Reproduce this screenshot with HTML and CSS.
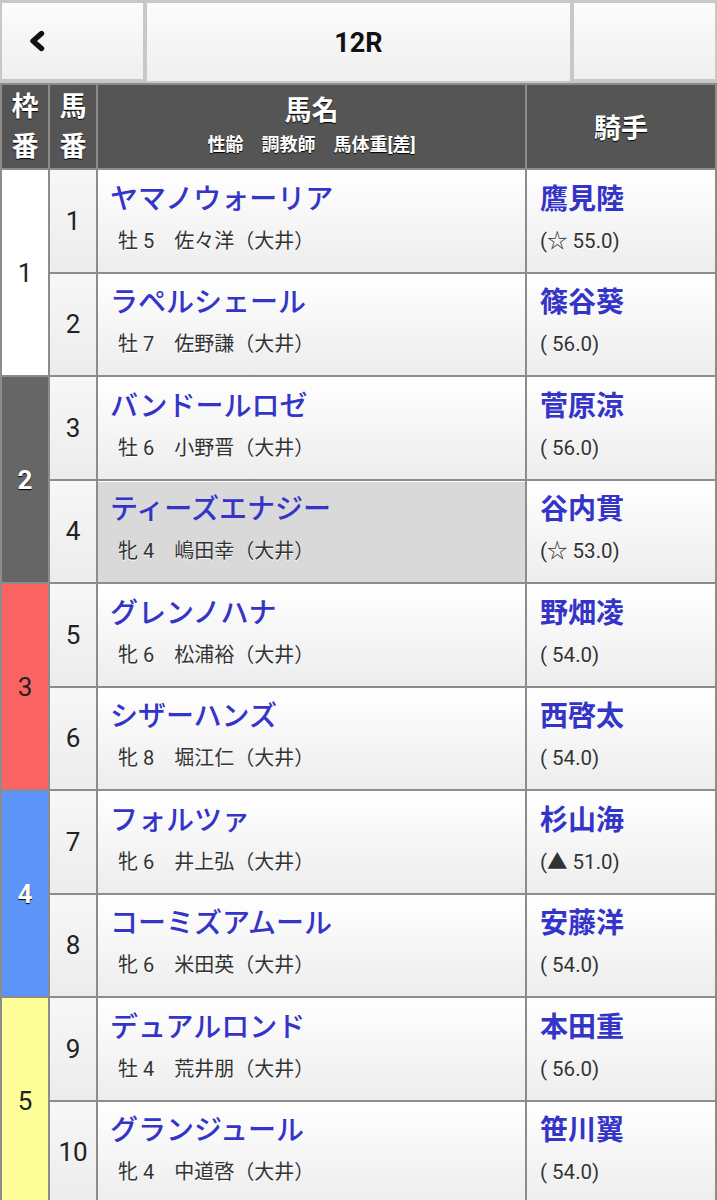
FILE: index.html
```html
<!DOCTYPE html>
<html lang="ja">
<head>
  <meta charset="UTF-8">
  <meta name="viewport" content="width=device-width, initial-scale=1.0">
  <title>12R 出馬表</title>
  <link rel="stylesheet" href="styles.css">
</head>
<body>
  <!-- Top Bar -->
  <header class="topbar">
    <a class="topbar-cell back" href="#">
      <svg width="18" height="22" viewBox="0 0 18 22"><polyline points="12.5,3.5 4,11 12.5,18.5" fill="none" stroke="#111" stroke-width="5.4" stroke-linecap="round" stroke-linejoin="round"/></svg>
    </a>
    <div class="topbar-cell title">12R</div>
    <div class="topbar-cell"></div>
  </header>

  <!-- Entry Table -->
  <table class="race">
    <thead>
      <tr>
        <th class="col-waku">枠<br>番</th>
        <th class="col-uma">馬<br>番</th>
        <th class="col-name">
          <div class="th-main">馬名</div>
          <div class="th-sub">性齢　調教師　馬体重[差]</div>
        </th>
        <th class="col-jockey">騎手</th>
      </tr>
    </thead>
    <tbody>
      <tr class="horse">
        <td class="waku waku-1" rowspan="2">1</td>
        <td class="umaban">1</td>
        <td class="name"><div class="horse-name">ヤマノウォーリア</div><div class="horse-sub">牡 5　佐々洋（大井）</div></td>
        <td class="jockey"><div class="jockey-name">鷹見陸</div><div class="jockey-sub">(☆ 55.0)</div></td>
      </tr>
      <tr class="horse">
        <td class="umaban">2</td>
        <td class="name"><div class="horse-name">ラペルシェール</div><div class="horse-sub">牡 7　佐野謙（大井）</div></td>
        <td class="jockey"><div class="jockey-name">篠谷葵</div><div class="jockey-sub">( 56.0)</div></td>
      </tr>
      <tr class="horse">
        <td class="waku waku-2" rowspan="2">2</td>
        <td class="umaban">3</td>
        <td class="name"><div class="horse-name">バンドールロゼ</div><div class="horse-sub">牡 6　小野晋（大井）</div></td>
        <td class="jockey"><div class="jockey-name">菅原涼</div><div class="jockey-sub">( 56.0)</div></td>
      </tr>
      <tr class="horse">
        <td class="umaban">4</td>
        <td class="name selected"><div class="horse-name">ティーズエナジー</div><div class="horse-sub">牝 4　嶋田幸（大井）</div></td>
        <td class="jockey"><div class="jockey-name">谷内貫</div><div class="jockey-sub">(☆ 53.0)</div></td>
      </tr>
      <tr class="horse">
        <td class="waku waku-3" rowspan="2">3</td>
        <td class="umaban">5</td>
        <td class="name"><div class="horse-name">グレンノハナ</div><div class="horse-sub">牝 6　松浦裕（大井）</div></td>
        <td class="jockey"><div class="jockey-name">野畑凌</div><div class="jockey-sub">( 54.0)</div></td>
      </tr>
      <tr class="horse">
        <td class="umaban">6</td>
        <td class="name"><div class="horse-name">シザーハンズ</div><div class="horse-sub">牝 8　堀江仁（大井）</div></td>
        <td class="jockey"><div class="jockey-name">西啓太</div><div class="jockey-sub">( 54.0)</div></td>
      </tr>
      <tr class="horse">
        <td class="waku waku-4" rowspan="2">4</td>
        <td class="umaban">7</td>
        <td class="name"><div class="horse-name">フォルツァ</div><div class="horse-sub">牝 6　井上弘（大井）</div></td>
        <td class="jockey"><div class="jockey-name">杉山海</div><div class="jockey-sub">(▲ 51.0)</div></td>
      </tr>
      <tr class="horse">
        <td class="umaban">8</td>
        <td class="name"><div class="horse-name">コーミズアムール</div><div class="horse-sub">牝 6　米田英（大井）</div></td>
        <td class="jockey"><div class="jockey-name">安藤洋</div><div class="jockey-sub">( 54.0)</div></td>
      </tr>
      <tr class="horse">
        <td class="waku waku-5" rowspan="2">5</td>
        <td class="umaban">9</td>
        <td class="name"><div class="horse-name">デュアルロンド</div><div class="horse-sub">牡 4　荒井朋（大井）</div></td>
        <td class="jockey"><div class="jockey-name">本田重</div><div class="jockey-sub">( 56.0)</div></td>
      </tr>
      <tr class="horse">
        <td class="umaban">10</td>
        <td class="name"><div class="horse-name">グランジュール</div><div class="horse-sub">牝 4　中道啓（大井）</div></td>
        <td class="jockey"><div class="jockey-name">笹川翼</div><div class="jockey-sub">( 54.0)</div></td>
      </tr>
    </tbody>
  </table>
</body>
</html>
```

FILE: styles.css
```css
/* General Styles */
body {
  margin: 0;
  background-color: #f9f9f9;
  font-family: Roboto, "Noto Sans CJK JP", sans-serif;
  color: #222;
}

/* Top Bar */
.topbar {
  display: grid;
  grid-template-columns: 1fr 3fr 1fr;
  gap: 4px;
  padding: 3px 2px 2px;
  background-color: #c8c8c8;
}

.topbar-cell {
  height: 76px;
  display: flex;
  align-items: center;
  justify-content: center;
  background: linear-gradient(#fcfcfc, #efefef);
  color: #111;
  text-decoration: none;
}

.topbar-cell.back {
  justify-content: flex-start;
  padding-left: 27px;
}

.topbar-cell.title {
  padding-top: 2px;
  font-size: 27px;
  font-weight: 700;
  text-shadow: 0 1px 0 #fff;
}

/* Entry Table */
.race {
  width: 717px;
  border-spacing: 2px;
  background-color: #8c8c8c;
  table-layout: fixed;
}

.race th {
  height: 83px;
  padding: 0;
  background-color: #555;
  color: #fff;
  font-weight: 700;
  text-shadow: 0 1px 1px #000;
}

.col-waku,
.col-uma {
  width: 46px;
  font-size: 27px;
  line-height: 40px;
}

.col-name {
  width: 427px;
}

.col-jockey {
  width: 188px;
  font-size: 27px;
}

.th-main {
  font-size: 27px;
  line-height: 36px;
}

.th-sub {
  font-size: 18px;
  line-height: 32px;
}

.horse {
  height: 101.5px;
}

.horse td {
  padding: 0;
  vertical-align: middle;
}

/* Frame (waku) colours */
.waku {
  text-align: center;
  font-size: 26px;
  color: #222;
}

.waku-1 { background-color: #fff; }
.waku-2 { background-color: #666; color: #fff; font-weight: 700; text-shadow: 0 1px 1px #000; }
.waku-3 { background-color: #fb6262; }
.waku-4 { background-color: #5d94f7; color: #fff; font-weight: 700; text-shadow: 0 1px 1px #000; }
.waku-5 { background-color: #ffff99; }

.umaban {
  text-align: center;
  font-size: 26px;
  background: linear-gradient(#f7f7f7, #ececec);
}

.name,
.jockey {
  background: linear-gradient(#fff, #ededed);
  box-shadow: inset 0 1px 0 #fff;
}

.name {
  padding-left: 12px !important;
}

.name.selected {
  background: #d9d9d9;
}

.jockey {
  padding-left: 13px !important;
}

.horse-name {
  font-size: 28px;
  font-weight: 500;
  line-height: 40px;
  color: #3434c8;
}

.horse-sub {
  padding-left: 8px;
  font-size: 20px;
  line-height: 42px;
  color: #333;
  text-shadow: 0 1px 0 #fff;
}

.jockey-name {
  font-size: 28px;
  font-weight: 700;
  line-height: 40px;
  color: #3434c8;
}

.jockey-sub {
  font-size: 20.5px;
  line-height: 42px;
  color: #333;
  text-shadow: 0 1px 0 #fff;
}
```
